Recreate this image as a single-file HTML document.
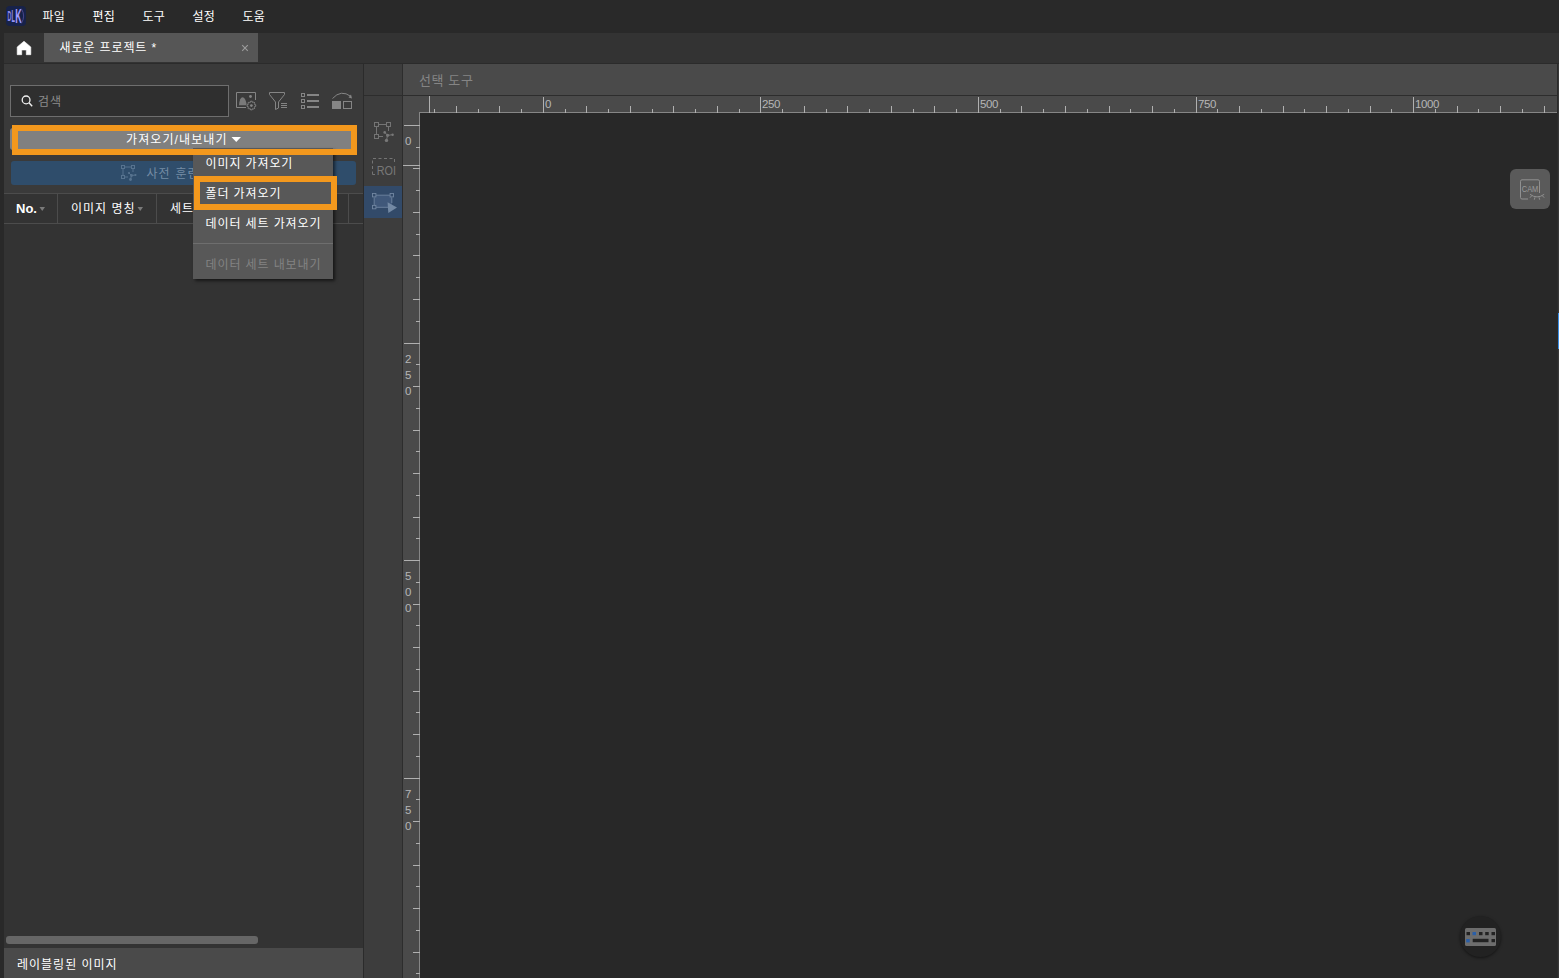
<!DOCTYPE html>
<html lang="ko">
<head>
<meta charset="utf-8">
<title>새로운 프로젝트</title>
<style>
html,body{margin:0;padding:0;}
body{width:1559px;height:978px;overflow:hidden;background:#292929;position:relative;
 font-family:"Liberation Sans","Noto Sans CJK KR",sans-serif;font-size:12px;color:#fff;}
.abs,.abs-all>*{position:absolute;}
.t{position:absolute;white-space:nowrap;line-height:20px;height:20px;font-size:12px;letter-spacing:1px;margin-top:1px;}
#menubar{left:0;top:0;width:1559px;height:33px;background:#292929;}
#tabbar{left:4px;top:33px;width:1555px;height:30px;background:#333333;}
#tab{left:44px;top:33px;width:214px;height:29px;background:#565656;}
#sepline{left:4px;top:63px;width:1555px;height:1px;background:#2b2b2b;}
#left{left:4px;top:64px;width:359px;height:914px;background:#3a3a3a;}
#list{left:4px;top:224px;width:359px;height:724px;background:#333333;}
#botbar{left:4px;top:948px;width:359px;height:30px;background:#4a4a4a;}
#div1{left:363px;top:64px;width:1px;height:914px;background:#2b2b2b;}
#strip{left:364px;top:64px;width:38px;height:914px;background:#3d3d3d;}
#div2{left:402px;top:64px;width:1px;height:914px;background:#2d2d2d;}
#tool{left:403px;top:64px;width:1154px;height:31px;background:#4a4a4a;}
#div3{left:364px;top:95px;width:1193px;height:1px;background:#2d2d2d;}
#hruler{left:403px;top:96px;width:1154px;height:17px;background:#4a4a4a;}
#vruler{left:403px;top:113px;width:17px;height:865px;background:#4a4a4a;}
#canvas{left:420px;top:113px;width:1137px;height:865px;background:#282828;}
#redge{left:1557px;top:64px;width:2px;height:914px;background:#383838;border-left:1px solid #2b2b2b;box-sizing:border-box;}
#bluebar{left:1558px;top:313px;width:1px;height:36px;background:#3a8ee6;}
#search{left:10px;top:85px;width:217px;height:30px;border:1px solid #6e6e6e;background:#2f2f2f;}
#impbtn{left:10px;top:128px;width:346px;height:22px;border-radius:3px;background:#808080;}
#obox1{left:12px;top:125px;width:333px;height:18px;border:6px solid #f3981d;}
#bluebtn{left:11px;top:161px;width:345px;height:24px;border-radius:3px;background:#2f4d6b;}
#thead{left:4px;top:193px;width:359px;height:31px;background:#333;}
.hl{position:absolute;background:#4c4c4c;}
#menu{left:193px;top:148px;width:140px;height:131px;background:#585858;box-shadow:2px 2px 3px rgba(0,0,0,.55);}
#obox2{left:194px;top:176px;width:131px;height:22px;border:6px solid #f3981d;}
#scroll{left:6px;top:936px;width:252px;height:8px;border-radius:3px;background:#666;}
#toolsel{left:364px;top:186px;width:38px;height:32px;background:#324a69;}
#cam{left:1510px;top:169px;width:40px;height:40px;border-radius:6px;background:#5a5a5a;}
#kbd{left:1460px;top:916px;width:41px;height:41px;border-radius:21px;background:#222;box-shadow:0 1px 3px rgba(0,0,0,.5);}
svg{position:absolute;left:0;top:0;overflow:visible;}
svg text{font-family:"Liberation Sans","Noto Sans CJK KR",sans-serif;}
</style>
</head>
<body>
<div id="menubar" class="abs"></div>
<div id="tabbar" class="abs"></div>
<div id="tab" class="abs"></div>
<div id="sepline" class="abs"></div>
<div id="left" class="abs"></div>
<div id="list" class="abs"></div>
<div id="botbar" class="abs"></div>
<div id="div1" class="abs"></div>
<div id="strip" class="abs"></div>
<div id="div2" class="abs"></div>
<div id="tool" class="abs"></div>
<div id="hruler" class="abs"></div>
<div id="vruler" class="abs"></div>
<div id="div3" class="abs"></div>
<div id="canvas" class="abs"></div>
<div id="redge" class="abs"></div>
<div id="bluebar" class="abs"></div>

<!-- menu bar -->
<svg width="1559" height="64" viewBox="0 0 1559 64">
 <rect x="6" y="6" width="20" height="20" rx="3.800" fill="#172249"/>
 <g font-weight="bold" fill="#a19cff"><text transform="translate(7.500,21) scale(0.370,1)" font-size="14.200" fill="#8d89ea">D</text><text transform="translate(11.500,21.900) scale(0.340,1)" font-size="16.500" fill="#9793f4">L</text><text transform="translate(15.300,23.300) scale(0.450,1)" font-size="20">K</text></g>
 <path d="M21.300 8.700 Q26 16 21.300 23.400" fill="none" stroke="#4d4b96" stroke-width="0.900"/>
 <path d="M17.200 47 L24 41.200 L30.800 47 V54.700 H26.300 V50 H21.700 V54.700 H17.200 Z" fill="#fff" stroke="#fff" stroke-width="0.600" stroke-linejoin="round"/>
 <path d="M242.200 45.200 l5.600 5.600 m0 -5.600 l-5.600 5.600" stroke="#9c9c9c" stroke-width="1.100" fill="none"/>
</svg>
<div class="t" style="left:42.5px;top:6px;letter-spacing:0.300px;">파일</div>
<div class="t" style="left:92.5px;top:6px;letter-spacing:0.300px;">편집</div>
<div class="t" style="left:142.5px;top:6px;letter-spacing:0.300px;">도구</div>
<div class="t" style="left:192.5px;top:6px;letter-spacing:0.300px;">설정</div>
<div class="t" style="left:242.5px;top:6px;letter-spacing:0.300px;">도움</div>
<div class="t" style="left:59.500px;top:37px;letter-spacing:0.900px;">새로운 프로젝트 *</div>

<!-- left panel -->
<div id="search" class="abs"></div>
<div class="t" style="left:38px;top:91px;color:#8c8c8c;">검색</div>
<div id="impbtn" class="abs"></div>
<div id="bluebtn" class="abs"></div>
<div class="t" style="left:146.500px;top:163px;color:#758ca5;word-spacing:0.500px;">사전 훈련된 레이블링</div>
<div id="thead" class="abs"></div>
<div class="hl" style="left:4px;top:193px;width:359px;height:1px;"></div>
<div class="hl" style="left:4px;top:223px;width:359px;height:1px;"></div>
<div class="hl" style="left:57px;top:194px;width:1px;height:29px;"></div>
<div class="hl" style="left:156px;top:194px;width:1px;height:29px;"></div>
<div class="hl" style="left:348px;top:194px;width:1px;height:29px;"></div>
<div class="t" style="left:16px;top:198px;font-weight:bold;font-size:13px;letter-spacing:0;">No.</div>
<div class="t" style="left:71px;top:198px;">이미지 명칭</div>
<div class="t" style="left:170px;top:198px;">세트</div>
<div id="scroll" class="abs"></div>
<div class="t" style="left:17px;top:954px;">레이블링된 이미지</div>
<div class="t" style="left:126px;top:129px;letter-spacing:1.100px;">가져오기/내보내기</div>

<!-- tool strip -->
<div id="toolsel" class="abs"></div>
<div class="t" style="left:419px;top:70px;color:#858585;font-size:13px;letter-spacing:0.600px;">선택 도구</div>

<!-- rulers -->
<svg width="1559" height="978" viewBox="0 0 1559 978">
 <g fill="#868686">
  <rect x="419" y="112" width="1138" height="1"/>
  <rect x="419" y="112" width="1" height="866"/>
 </g>
 <g fill="#b0b0b0"><rect x="434" y="109" width="1" height="4"/><rect x="456" y="106" width="1" height="7"/><rect x="478" y="109" width="1" height="4"/><rect x="499" y="106" width="1" height="7"/><rect x="521" y="109" width="1" height="4"/><rect x="543" y="97" width="1" height="16"/><rect x="565" y="109" width="1" height="4"/><rect x="586" y="106" width="1" height="7"/><rect x="608" y="109" width="1" height="4"/><rect x="630" y="106" width="1" height="7"/><rect x="652" y="109" width="1" height="4"/><rect x="673" y="106" width="1" height="7"/><rect x="695" y="109" width="1" height="4"/><rect x="717" y="106" width="1" height="7"/><rect x="739" y="109" width="1" height="4"/><rect x="760" y="97" width="1" height="16"/><rect x="782" y="109" width="1" height="4"/><rect x="804" y="106" width="1" height="7"/><rect x="826" y="109" width="1" height="4"/><rect x="847" y="106" width="1" height="7"/><rect x="869" y="109" width="1" height="4"/><rect x="891" y="106" width="1" height="7"/><rect x="913" y="109" width="1" height="4"/><rect x="934" y="106" width="1" height="7"/><rect x="956" y="109" width="1" height="4"/><rect x="978" y="97" width="1" height="16"/><rect x="1000" y="109" width="1" height="4"/><rect x="1021" y="106" width="1" height="7"/><rect x="1043" y="109" width="1" height="4"/><rect x="1065" y="106" width="1" height="7"/><rect x="1087" y="109" width="1" height="4"/><rect x="1109" y="106" width="1" height="7"/><rect x="1130" y="109" width="1" height="4"/><rect x="1152" y="106" width="1" height="7"/><rect x="1174" y="109" width="1" height="4"/><rect x="1196" y="97" width="1" height="16"/><rect x="1217" y="109" width="1" height="4"/><rect x="1239" y="106" width="1" height="7"/><rect x="1261" y="109" width="1" height="4"/><rect x="1283" y="106" width="1" height="7"/><rect x="1304" y="109" width="1" height="4"/><rect x="1326" y="106" width="1" height="7"/><rect x="1348" y="109" width="1" height="4"/><rect x="1370" y="106" width="1" height="7"/><rect x="1391" y="109" width="1" height="4"/><rect x="1413" y="97" width="1" height="16"/><rect x="1435" y="109" width="1" height="4"/><rect x="1457" y="106" width="1" height="7"/><rect x="1478" y="109" width="1" height="4"/><rect x="1500" y="106" width="1" height="7"/><rect x="1522" y="109" width="1" height="4"/><rect x="1544" y="106" width="1" height="7"/><rect x="404" y="125" width="16" height="1"/><rect x="416" y="147" width="4" height="1"/><rect x="413" y="168" width="7" height="1"/><rect x="416" y="190" width="4" height="1"/><rect x="413" y="212" width="7" height="1"/><rect x="416" y="234" width="4" height="1"/><rect x="413" y="255" width="7" height="1"/><rect x="416" y="277" width="4" height="1"/><rect x="413" y="299" width="7" height="1"/><rect x="416" y="321" width="4" height="1"/><rect x="404" y="343" width="16" height="1"/><rect x="416" y="364" width="4" height="1"/><rect x="413" y="386" width="7" height="1"/><rect x="416" y="408" width="4" height="1"/><rect x="413" y="430" width="7" height="1"/><rect x="416" y="451" width="4" height="1"/><rect x="413" y="473" width="7" height="1"/><rect x="416" y="495" width="4" height="1"/><rect x="413" y="517" width="7" height="1"/><rect x="416" y="538" width="4" height="1"/><rect x="404" y="560" width="16" height="1"/><rect x="416" y="582" width="4" height="1"/><rect x="413" y="604" width="7" height="1"/><rect x="416" y="625" width="4" height="1"/><rect x="413" y="647" width="7" height="1"/><rect x="416" y="669" width="4" height="1"/><rect x="413" y="691" width="7" height="1"/><rect x="416" y="712" width="4" height="1"/><rect x="413" y="734" width="7" height="1"/><rect x="416" y="756" width="4" height="1"/><rect x="404" y="778" width="16" height="1"/><rect x="416" y="799" width="4" height="1"/><rect x="413" y="821" width="7" height="1"/><rect x="416" y="843" width="4" height="1"/><rect x="413" y="865" width="7" height="1"/><rect x="416" y="886" width="4" height="1"/><rect x="413" y="908" width="7" height="1"/><rect x="416" y="930" width="4" height="1"/><rect x="413" y="952" width="7" height="1"/><rect x="416" y="973" width="4" height="1"/>
  <rect x="429" y="96" width="1" height="17"/>
  <rect x="403" y="165" width="17" height="1"/>
 </g>
 <g fill="#b6b6b6" font-size="11.500"><text x="545" y="108" letter-spacing="-0.4">0</text><text x="762" y="108" letter-spacing="-0.4">250</text><text x="980" y="108" letter-spacing="-0.4">500</text><text x="1198" y="108" letter-spacing="-0.4">750</text><text x="1415" y="108" letter-spacing="-0.4">1000</text><text x="405" y="145">0</text><text x="405" y="363">2</text><text x="405" y="379">5</text><text x="405" y="395">0</text><text x="405" y="580">5</text><text x="405" y="596">0</text><text x="405" y="612">0</text><text x="405" y="798">7</text><text x="405" y="814">5</text><text x="405" y="830">0</text></g>
</svg>

<!-- dropdown -->
<div id="menu" class="abs"></div>
<div class="hl" style="left:193px;top:243px;width:140px;height:1px;background:#6e6e6e;"></div>
<div class="t" style="left:205.500px;top:153px;;letter-spacing:0.900px;">이미지 가져오기</div>
<div class="t" style="left:205.500px;top:183px;;letter-spacing:0.900px;">폴더 가져오기</div>
<div class="t" style="left:205.500px;top:213px;;letter-spacing:0.900px;">데이터 세트 가져오기</div>
<div class="t" style="left:205.500px;top:254px;color:#838383;letter-spacing:0.900px;">데이터 세트 내보내기</div>
<div id="obox2" class="abs"></div>
<div id="obox1" class="abs"></div>

<div id="cam" class="abs"></div>
<div id="kbd" class="abs"></div>

<!-- icons -->
<svg width="1559" height="978" viewBox="0 0 1559 978">
 <!-- search magnifier -->
 <circle cx="26.100" cy="99.900" r="3.900" fill="none" stroke="#f0f0f0" stroke-width="1.300"/>
 <path d="M29 102.800 L32.200 106.200" stroke="#f0f0f0" stroke-width="1.400"/>
 <!-- dropdown triangle -->
 <path d="M231.500 137 H241 L236.250 142 Z" fill="#fff"/>

 <!-- left panel icons -->
 <g fill="none" stroke="#858585" stroke-width="1">
  <path d="M255.500 100 V92.500 H236.500 V107.500 H246"/>
  <path d="M254.68 104.64 L255.72 104.72 L255.72 106.38 L254.68 106.46 L254.36 107.23 L255.04 108.02 L253.87 109.19 L253.08 108.51 L252.31 108.83 L252.23 109.87 L250.57 109.87 L250.49 108.83 L249.72 108.51 L248.93 109.19 L247.76 108.02 L248.44 107.23 L248.12 106.46 L247.08 106.38 L247.08 104.72 L248.12 104.64 L248.44 103.87 L247.76 103.08 L248.93 101.91 L249.72 102.59 L250.49 102.27 L250.57 101.23 L252.23 101.23 L252.31 102.27 L253.08 102.59 L253.87 101.91 L255.04 103.08 L254.36 103.87 Z" stroke-width="0.900" stroke-linejoin="round"/>
  <path d="M269.500 92.500 H284.500 V94.500 L278.500 102 V108 L275.500 109.500 V102 L269.500 94.500 Z"/>
  <path d="M281 103.500 H287 M281 105.500 H287 M281 107.500 H287"/>
  <rect x="301.500" y="93.500" width="3" height="3"/>
  <rect x="301.500" y="99.500" width="3" height="3"/>
  <rect x="301.500" y="105.500" width="3" height="3"/>
  <path d="M307 95 H319 M307 101 H319 M307 107 H319" stroke-width="2"/>
  <path d="M332.500 98.500 Q341 89 351 96.500"/>
  <rect x="343.500" y="101.500" width="8" height="7"/>
 </g>
 <g fill="#858585">
  <path d="M239 105.200 Q239.600 97.200 242.600 97.200 Q245.300 97.200 246.600 104 L246.200 105.200 Z" fill="#7a7a7a"/>
  <circle cx="250.500" cy="96.500" r="1.400"/>
  <circle cx="251.400" cy="105.550" r="1.350"/>
  <rect x="332" y="101" width="9" height="8"/>
  <path d="M352 98.500 L348.500 97.500 L351 94.500 Z"/>
 </g>
 <!-- pre-label button icon -->
 <g fill="none" stroke="#57738f" stroke-width="1">
  <rect x="121.500" y="165.500" width="3" height="3"/>
  <rect x="131.500" y="165.500" width="3" height="3"/>
  <rect x="121.500" y="175.500" width="3" height="3"/>
  <path d="M124.500 167 H131.500 M123 168.500 V175.500 M133 168.500 V172 M124.500 177 H128 M129 173 L131.500 175.500 L135.500 175 M131.500 175.500 L130.500 179.500"/>
 </g>
 <g fill="#57738f">
  <circle cx="129" cy="173" r="1.100"/><circle cx="131.500" cy="175.500" r="1.400"/><circle cx="135.500" cy="175" r="1"/><circle cx="130.500" cy="179.500" r="1.400"/>
 </g>
 <!-- tool strip icons -->
 <g fill="none" stroke="#747474" stroke-width="1">
  <rect x="374.500" y="122.500" width="4" height="4"/>
  <rect x="386.500" y="122.500" width="4" height="4"/>
  <rect x="374.500" y="134.500" width="4" height="4"/>
  <path d="M378.500 124.500 H386.500 M376.500 126.500 V134.500 M388.500 126.500 V131 M378.500 136.500 H383 M384.700 132.400 L387.600 135.300 L392.600 134.700 M387.600 135.300 L386.500 140.400"/>
  <path d="M372.500 174.500 V158.500 H394.500 V163" stroke-dasharray="3 2.500"/>
  <path d="M372.500 174.500 H375"/>
 </g>
 <g fill="#787878">
  <circle cx="384.700" cy="132.400" r="1.300"/><circle cx="387.600" cy="135.300" r="1.600"/><circle cx="392.600" cy="134.700" r="1.200"/><circle cx="386.500" cy="140.400" r="1.700"/>
  <text transform="translate(376.800,175) scale(0.940,1.080)" font-size="11.500">ROI</text>
 </g>
 <!-- select tool (active) -->
 <rect x="374.500" y="195.500" width="17.500" height="11.800" fill="#40587a" stroke="none"/>
 <g fill="none" stroke="#7186a1" stroke-width="0.900">
  <path d="M376 195.200 H390 M374.200 197.500 V205.200 M391.800 197.500 V203 M376 207.300 H388"/>
  <rect x="372.500" y="193.500" width="3.400" height="3.400" fill="#324a69"/>
  <rect x="390.100" y="193.500" width="3.400" height="3.400" fill="#324a69"/>
  <rect x="372.500" y="205.400" width="3.400" height="3.400" fill="#324a69"/>
 </g>
 <path d="M387.600 202.200 L397 207.600 L388.300 213 Z" fill="#7389a4"/>
 <!-- CAM -->
 <g fill="none" stroke="#909090" stroke-width="1">
  <path d="M1528 199 H1522 Q1520.500 199 1520.500 197.500 V181.300 Q1520.500 179.800 1522 179.800 H1538 Q1539.500 179.800 1539.500 181.300 V193"/>
  <path d="M1530 194.300 Q1537 199.500 1544.200 194.300 M1531.700 195.700 L1530 197.700 M1535 197.300 L1534.300 199.700 M1539 197.300 L1539.700 199.700 M1542.300 195.700 L1544.200 197.700"/>
 </g>
 <text x="1521.800" y="192.200" font-size="8.500" fill="#9a9a9a" textLength="16.500" lengthAdjust="spacingAndGlyphs">CAM</text>
 <!-- keyboard -->
 <rect x="1465" y="928" width="31" height="18" rx="1.500" fill="#6d6d6d"/>
 <g fill="#222">
  <rect x="1466.500" y="932" width="3.500" height="3.200"/><rect x="1479" y="932" width="3.500" height="3.200"/><rect x="1485.200" y="932" width="3.500" height="3.200"/><rect x="1491.500" y="932" width="3.500" height="3.200"/>
  <rect x="1472.700" y="938.800" width="15.800" height="3.400"/><rect x="1491.500" y="939" width="3.500" height="3.200"/>
 </g>
 <rect x="1472.500" y="932" width="3.500" height="3.200" fill="#2a5fa8"/><rect x="1466.200" y="939" width="3.500" height="3.400" fill="#2a5fa8"/>
 <!-- sort arrows -->
 <path d="M39.500 207 H45 L42.250 211 Z" fill="#7a7a7a"/>
 <path d="M137.500 207 H143 L140.250 211 Z" fill="#7a7a7a"/>
</svg>
</body>
</html>
